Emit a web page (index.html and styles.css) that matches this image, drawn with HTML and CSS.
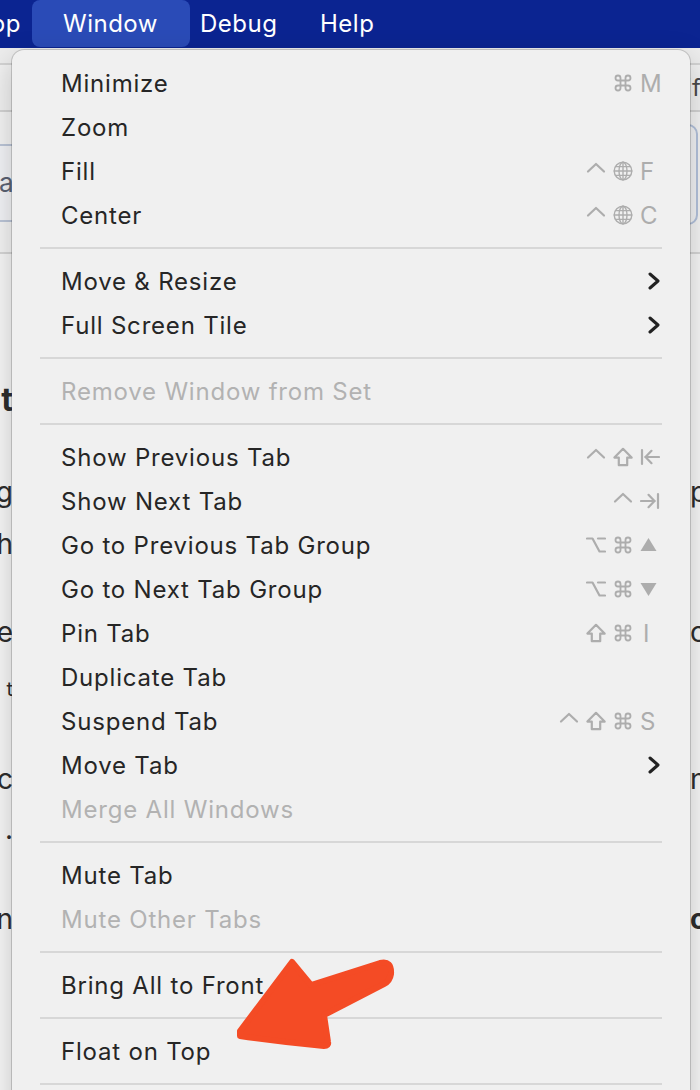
FILE: index.html
```html
<!DOCTYPE html>
<html>
<head>
<meta charset="utf-8">
<link rel="stylesheet" href="styles.css">
</head>
<body>
<div class="menubar">
  <div class="mb-item mb-app"><span>App</span></div>
  <div class="mb-item mb-window">Window</div>
  <div class="mb-item mb-debug">Debug</div>
  <div class="mb-item mb-help">Help</div>
</div>

<div class="page">
  <div class="pg-top"></div>
  <div class="pg-tabs"><span class="pg-tabtext">'f</span></div>
  <div class="pg-search">
    <div class="sbox-l">a</div>
    <div class="sbox-r"></div>
  </div>
  <div class="pg-body">
    <div class="row r1"><span class="lf big">Int</span></div>
    <div class="row r2"><span class="lf">g</span><span class="rt">p</span></div>
    <div class="row r3"><span class="lf">h</span></div>
    <div class="row r4"><span class="lf">e</span><span class="rt">c</span></div>
    <div class="row r5"><span class="lf small">t</span></div>
    <div class="row r6"><span class="lf">nc</span><span class="rt">n</span></div>
    <div class="row r7"><span class="lf">.</span></div>
    <div class="row r8"><span class="lf">n</span><span class="rt bold">o</span></div>
  </div>
</div>

<div class="menu">
  <div class="item"><span class="label">Minimize</span>
    <span class="sc"><span class="k"><svg viewBox="0 0 24 24" class="ic"><path d="M15 6v12a3 3 0 1 0 3-3H6a3 3 0 1 0 3 3V6a3 3 0 1 0-3 3h12a3 3 0 1 0-3-3"/></svg></span><span class="kl">M</span></span></div>
  <div class="item"><span class="label">Zoom</span></div>
  <div class="item"><span class="label">Fill</span>
    <span class="sc"><span class="k"><svg viewBox="0 0 20 20" class="ic"><polyline points="2,10.5 10,3 18,10.5"/></svg></span><span class="k"><svg viewBox="0 0 20 20" class="ic globe"><circle cx="10" cy="10" r="8.8"/><ellipse cx="10" cy="10" rx="4" ry="8.8"/><line x1="10" y1="1.2" x2="10" y2="18.8"/><line x1="1.2" y1="10" x2="18.8" y2="10"/><line x1="2.6" y1="5.6" x2="17.4" y2="5.6"/><line x1="2.6" y1="14.4" x2="17.4" y2="14.4"/></svg></span><span class="kl">F</span></span></div>
  <div class="item"><span class="label">Center</span>
    <span class="sc"><span class="k"><svg viewBox="0 0 20 20" class="ic"><polyline points="2,10.5 10,3 18,10.5"/></svg></span><span class="k"><svg viewBox="0 0 20 20" class="ic globe"><circle cx="10" cy="10" r="8.8"/><ellipse cx="10" cy="10" rx="4" ry="8.8"/><line x1="10" y1="1.2" x2="10" y2="18.8"/><line x1="1.2" y1="10" x2="18.8" y2="10"/><line x1="2.6" y1="5.6" x2="17.4" y2="5.6"/><line x1="2.6" y1="14.4" x2="17.4" y2="14.4"/></svg></span><span class="kl">C</span></span></div>
  <div class="sep"></div>
  <div class="item"><span class="label">Move &amp; Resize</span>
    <span class="chev"><svg viewBox="0 0 12 18"><polyline points="2,2 10,9 2,16"/></svg></span></div>
  <div class="item"><span class="label">Full Screen Tile</span>
    <span class="chev"><svg viewBox="0 0 12 18"><polyline points="2,2 10,9 2,16"/></svg></span></div>
  <div class="sep"></div>
  <div class="item disabled"><span class="label">Remove Window from Set</span></div>
  <div class="sep"></div>
  <div class="item"><span class="label">Show Previous Tab</span>
    <span class="sc"><span class="k"><svg viewBox="0 0 20 20" class="ic"><polyline points="2,10.5 10,3 18,10.5"/></svg></span><span class="k"><svg viewBox="0 0 20 20" class="ic"><path d="M10 1.8 L18.6 10.6 H14.2 V18.2 H5.8 V10.6 H1.4 Z"/></svg></span><span class="kl"><svg viewBox="0 0 20 20" class="ic tab"><line x1="2" y1="3" x2="2" y2="17"/><line x1="5.5" y1="10" x2="19" y2="10"/><polyline points="11.5,3.8 5.5,10 11.5,16.2"/></svg></span></span></div>
  <div class="item"><span class="label">Show Next Tab</span>
    <span class="sc"><span class="k"><svg viewBox="0 0 20 20" class="ic"><polyline points="2,10.5 10,3 18,10.5"/></svg></span><span class="kl"><svg viewBox="0 0 20 20" class="ic tab"><line x1="18" y1="3" x2="18" y2="17"/><line x1="1" y1="10" x2="14.5" y2="10"/><polyline points="8.5,3.8 14.5,10 8.5,16.2"/></svg></span></span></div>
  <div class="item"><span class="label">Go to Previous Tab Group</span>
    <span class="sc"><span class="k"><svg viewBox="0 0 20 20" class="ic"><path d="M1 3.5h5.5l7 13h5.5M12 3.5h7"/></svg></span><span class="k"><svg viewBox="0 0 24 24" class="ic"><path d="M15 6v12a3 3 0 1 0 3-3H6a3 3 0 1 0 3 3V6a3 3 0 1 0-3 3h12a3 3 0 1 0-3-3"/></svg></span><span class="kl"><svg viewBox="0 0 20 20" class="tri"><polygon points="8.5,3 16.5,16 0.5,16"/></svg></span></span></div>
  <div class="item"><span class="label">Go to Next Tab Group</span>
    <span class="sc"><span class="k"><svg viewBox="0 0 20 20" class="ic"><path d="M1 3.5h5.5l7 13h5.5M12 3.5h7"/></svg></span><span class="k"><svg viewBox="0 0 24 24" class="ic"><path d="M15 6v12a3 3 0 1 0 3-3H6a3 3 0 1 0 3 3V6a3 3 0 1 0-3 3h12a3 3 0 1 0-3-3"/></svg></span><span class="kl"><svg viewBox="0 0 20 20" class="tri"><polygon points="0.5,4 16.5,4 8.5,17"/></svg></span></span></div>
  <div class="item"><span class="label">Pin Tab</span>
    <span class="sc"><span class="k"><svg viewBox="0 0 20 20" class="ic"><path d="M10 1.8 L18.6 10.6 H14.2 V18.2 H5.8 V10.6 H1.4 Z"/></svg></span><span class="k"><svg viewBox="0 0 24 24" class="ic"><path d="M15 6v12a3 3 0 1 0 3-3H6a3 3 0 1 0 3 3V6a3 3 0 1 0-3 3h12a3 3 0 1 0-3-3"/></svg></span><span class="kl pin">I</span></span></div>
  <div class="item"><span class="label">Duplicate Tab</span></div>
  <div class="item"><span class="label">Suspend Tab</span>
    <span class="sc"><span class="k"><svg viewBox="0 0 20 20" class="ic"><polyline points="2,10.5 10,3 18,10.5"/></svg></span><span class="k"><svg viewBox="0 0 20 20" class="ic"><path d="M10 1.8 L18.6 10.6 H14.2 V18.2 H5.8 V10.6 H1.4 Z"/></svg></span><span class="k"><svg viewBox="0 0 24 24" class="ic"><path d="M15 6v12a3 3 0 1 0 3-3H6a3 3 0 1 0 3 3V6a3 3 0 1 0-3 3h12a3 3 0 1 0-3-3"/></svg></span><span class="kl">S</span></span></div>
  <div class="item"><span class="label">Move Tab</span>
    <span class="chev"><svg viewBox="0 0 12 18"><polyline points="2,2 10,9 2,16"/></svg></span></div>
  <div class="item disabled"><span class="label">Merge All Windows</span></div>
  <div class="sep"></div>
  <div class="item"><span class="label">Mute Tab</span></div>
  <div class="item disabled"><span class="label">Mute Other Tabs</span></div>
  <div class="sep"></div>
  <div class="item"><span class="label">Bring All to Front</span></div>
  <div class="sep"></div>
  <div class="item"><span class="label">Float on Top</span></div>
  <div class="sep"></div>
  <div class="item"><span class="label">Tab Overview</span></div>
</div>

<svg class="arrow" viewBox="220 945 190 115">
  <path d="M240 1031 L292 962 L311 985 L380 963 Q392 960 391 974 Q390 981 384 984 L324 1015 L328 1042 Q329 1046 324 1046 Q280 1042 240 1036 Z"/>
</svg>
</body>
</html>
```

FILE: styles.css
```css
* { box-sizing: border-box; margin: 0; padding: 0; }
html, body { width: 700px; height: 1090px; overflow: hidden; }
body {
  font-family: Inter, "Noto Sans", sans-serif;
  background: #f7f7f7;
  color: #262626;
  position: relative;
}

/* menu bar */
.menubar {
  height: 48px;
  background: #0b2491;
  display: flex;
  align-items: flex-start;
  color: #ffffff;
  font-size: 24px;
  letter-spacing: 0.5px;
}
.mb-item {
  height: 47px;
  display: flex;
  align-items: center;
  white-space: nowrap;
}
.mb-app { width: 21px; justify-content: flex-end; overflow: hidden; }
.mb-window {
  margin-left: 11px;
  width: 158px;
  padding-left: 31px;
  background: #2a4bb7;
  border-radius: 8px;
}
.mb-debug { margin-left: 10px; width: 120px; }

/* background page */
.page { background: #f7f7f7; }
.pg-top { height: 17px; background: #ededed; border-bottom: 2px solid #d3d3d3; }
.pg-tabs {
  height: 47px;
  background: #f1f1f1;
  border-bottom: 2px solid #d3d3d3;
  display: flex;
  justify-content: flex-end;
  align-items: center;
  font-size: 24px;
  color: #4a4a4a;
}
.pg-tabtext { margin-right: -1px; }
.pg-search {
  height: 142px;
  background: #f4f4f4;
  border-bottom: 2px solid #d6d6d6;
  display: flex;
  justify-content: space-between;
  align-items: center;
}
.sbox-l {
  margin-left: -20px;
  margin-top: 1px;
  width: 240px;
  height: 78px;
  padding-left: 19px;
  border: 2px solid #bcc6d8;
  border-left: none;
  display: flex;
  align-items: center;
  font-size: 26px;
  color: #5b6273;
  background: #f3f4f7;
}
.sbox-r {
  width: 40px;
  height: 101px;
  margin-right: 2px;
  margin-top: -16px;
  border: 2px solid #b3c2dc;
  border-radius: 10px;
  background: #f2f3f6;
}
.pg-body { display: flex; flex-direction: column; }
.row {
  height: 30px;
  display: flex;
  justify-content: space-between;
  align-items: center;
  font-size: 28px;
  color: #2d2d2d;
}
.lf {
  width: 13px;
  display: flex;
  justify-content: flex-end;
  overflow: hidden;
  white-space: nowrap;
}
.rt { width: 10px; overflow: hidden; white-space: nowrap; margin-left: auto; }
.big { font-size: 32px; font-weight: 700; }
.small { font-size: 20px; }
.bold { font-weight: 700; }
.r1 { margin-top: 130px; }
.r2 { margin-top: 63px; }
.r3 { margin-top: 22px; }
.r4 { margin-top: 58px; }
.r5 { margin-top: 27px; }
.r6 { margin-top: 60px; }
.r7 { margin-top: 20px; }
.r8 { margin-top: 60px; }

/* dropdown menu */
.menu {
  position: absolute;
  top: 50px;
  left: 12px;
  width: 678px;
  height: 1080px;
  background: #f0f0f0;
  border-radius: 12px 12px 0 0;
  box-shadow: 0 0 0 1px rgba(0, 0, 0, 0.16), 0 10px 30px rgba(0, 0, 0, 0.22);
  padding: 11px 28px 0 28px;
  font-size: 24px;
  letter-spacing: 0.8px;
}
.item {
  height: 44px;
  display: flex;
  align-items: center;
  justify-content: space-between;
  padding-left: 21px;
  color: #262626;
  white-space: nowrap;
}
.item.disabled { color: #b2b2b2; }
.sep {
  height: 22px;
  display: flex;
  align-items: center;
}
.sep::before {
  content: "";
  display: block;
  width: 100%;
  height: 2px;
  background: #d7d7d7;
}
.sc {
  display: flex;
  align-items: center;
  gap: 7px;
  color: #adadad;
}
.k { width: 20px; height: 20px; display: flex; }
.kl { width: 22px; display: flex; align-items: center; letter-spacing: 0; }
.kl.pin { padding-left: 3px; }
.ic {
  width: 20px;
  height: 20px;
  fill: none;
  stroke: #adadad;
  stroke-width: 2.2;
  stroke-linecap: round;
  stroke-linejoin: round;
}
.ic.globe { stroke-width: 1.4; }
.ic.tab { stroke-width: 2.2; }
.tri { width: 20px; height: 20px; fill: #adadad; }
.chev { width: 22px; display: flex; justify-content: flex-end; padding-right: 2px; }
.chev svg {
  width: 12px;
  height: 18px;
  fill: none;
  stroke: #222222;
  stroke-width: 3;
  stroke-linecap: round;
  stroke-linejoin: round;
}

/* annotation arrow */
.arrow {
  position: absolute;
  left: 220px;
  top: 945px;
  width: 190px;
  height: 115px;
}
.arrow path {
  fill: #f44b25;
  stroke: #f44b25;
  stroke-width: 6;
  stroke-linejoin: round;
}
```
